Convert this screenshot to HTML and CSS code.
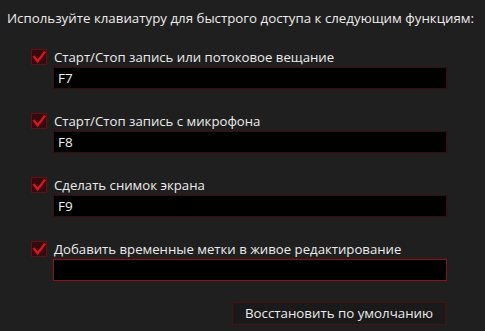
FILE: index.html
```html
<!DOCTYPE html>
<html lang="ru">
<head>
<meta charset="utf-8">
<link rel="stylesheet" href="styles.css">
</head>
<body>
<div class="panel">
  <div class="title">Используйте клавиатуру для быстрого доступа к следующим функциям:</div>
  <div class="groups">
    <div class="group">
      <div class="row">
        <span class="check"><svg viewBox="0 0 15 15" width="15" height="15"><path d="M2.5 7 L6 11.5 L13.5 2" fill="none" stroke="#d8141e" stroke-width="2.6" stroke-linecap="square"/></svg></span>
        <span class="label">Старт/Стоп запись или потоковое вещание</span>
      </div>
      <div class="field">F7</div>
    </div>
    <div class="group">
      <div class="row">
        <span class="check"><svg viewBox="0 0 15 15" width="15" height="15"><path d="M2.5 7 L6 11.5 L13.5 2" fill="none" stroke="#d8141e" stroke-width="2.6" stroke-linecap="square"/></svg></span>
        <span class="label">Старт/Стоп запись с микрофона</span>
      </div>
      <div class="field">F8</div>
    </div>
    <div class="group">
      <div class="row">
        <span class="check"><svg viewBox="0 0 15 15" width="15" height="15"><path d="M2.5 7 L6 11.5 L13.5 2" fill="none" stroke="#d8141e" stroke-width="2.6" stroke-linecap="square"/></svg></span>
        <span class="label">Сделать снимок экрана</span>
      </div>
      <div class="field">F9</div>
    </div>
    <div class="group">
      <div class="row">
        <span class="check"><svg viewBox="0 0 15 15" width="15" height="15"><path d="M2.5 7 L6 11.5 L13.5 2" fill="none" stroke="#d8141e" stroke-width="2.6" stroke-linecap="square"/></svg></span>
        <span class="label">Добавить временные метки в живое редактирование</span>
      </div>
      <div class="field active"></div>
    </div>
  </div>
  <div class="actions">
    <button class="btn">Восстановить по умолчанию</button>
  </div>
</div>
</body>
</html>
```
FILE: styles.css
```css
html, body {
  margin: 0;
  padding: 0;
  background: #1f1f1f;
  width: 485px;
  height: 331px;
  overflow: hidden;
}
.panel {
  font-family: "Open Sans", "Noto Sans", sans-serif;
  color: #ececec;
  font-size: 13.2px;
  padding: 8px 0 0 7px;
}
.title {
  height: 20px;
  line-height: 20px;
  font-size: 13.3px;
  white-space: nowrap;
}
.groups {
  display: flex;
  flex-direction: column;
  gap: 24px;
  padding: 21px 0 0 24px;
}
.group {
  display: flex;
  flex-direction: column;
  gap: 2px;
}
.row {
  display: flex;
  align-items: center;
  gap: 7px;
  height: 16px;
}
.check {
  width: 16px;
  height: 16px;
  box-sizing: border-box;
  background: #360a0d;
  border: 1px solid #5a1419;
  display: flex;
  align-items: center;
  justify-content: center;
}
.check svg {
  display: block;
}
.label {
  line-height: 16px;
  white-space: nowrap;
}
.field {
  margin-left: 22px;
  width: 394px;
  height: 22px;
  box-sizing: border-box;
  background: #000;
  border: 1px solid #3a0c10;
  padding-left: 4px;
  line-height: 20px;
  font-size: 13.5px;
  color: #f0f0f0;
}
.field.active {
  border-color: #8c1218;
}
.actions {
  display: flex;
  padding: 21px 0 0 225px;
}
.btn {
  width: 214px;
  height: 23px;
  box-sizing: border-box;
  background: #1a1a1a;
  border: 1px solid #4a1014;
  color: #ececec;
  font-family: "Open Sans", "Noto Sans", sans-serif;
  font-size: 13.3px;
  padding: 0;
  line-height: 21px;
}
```
